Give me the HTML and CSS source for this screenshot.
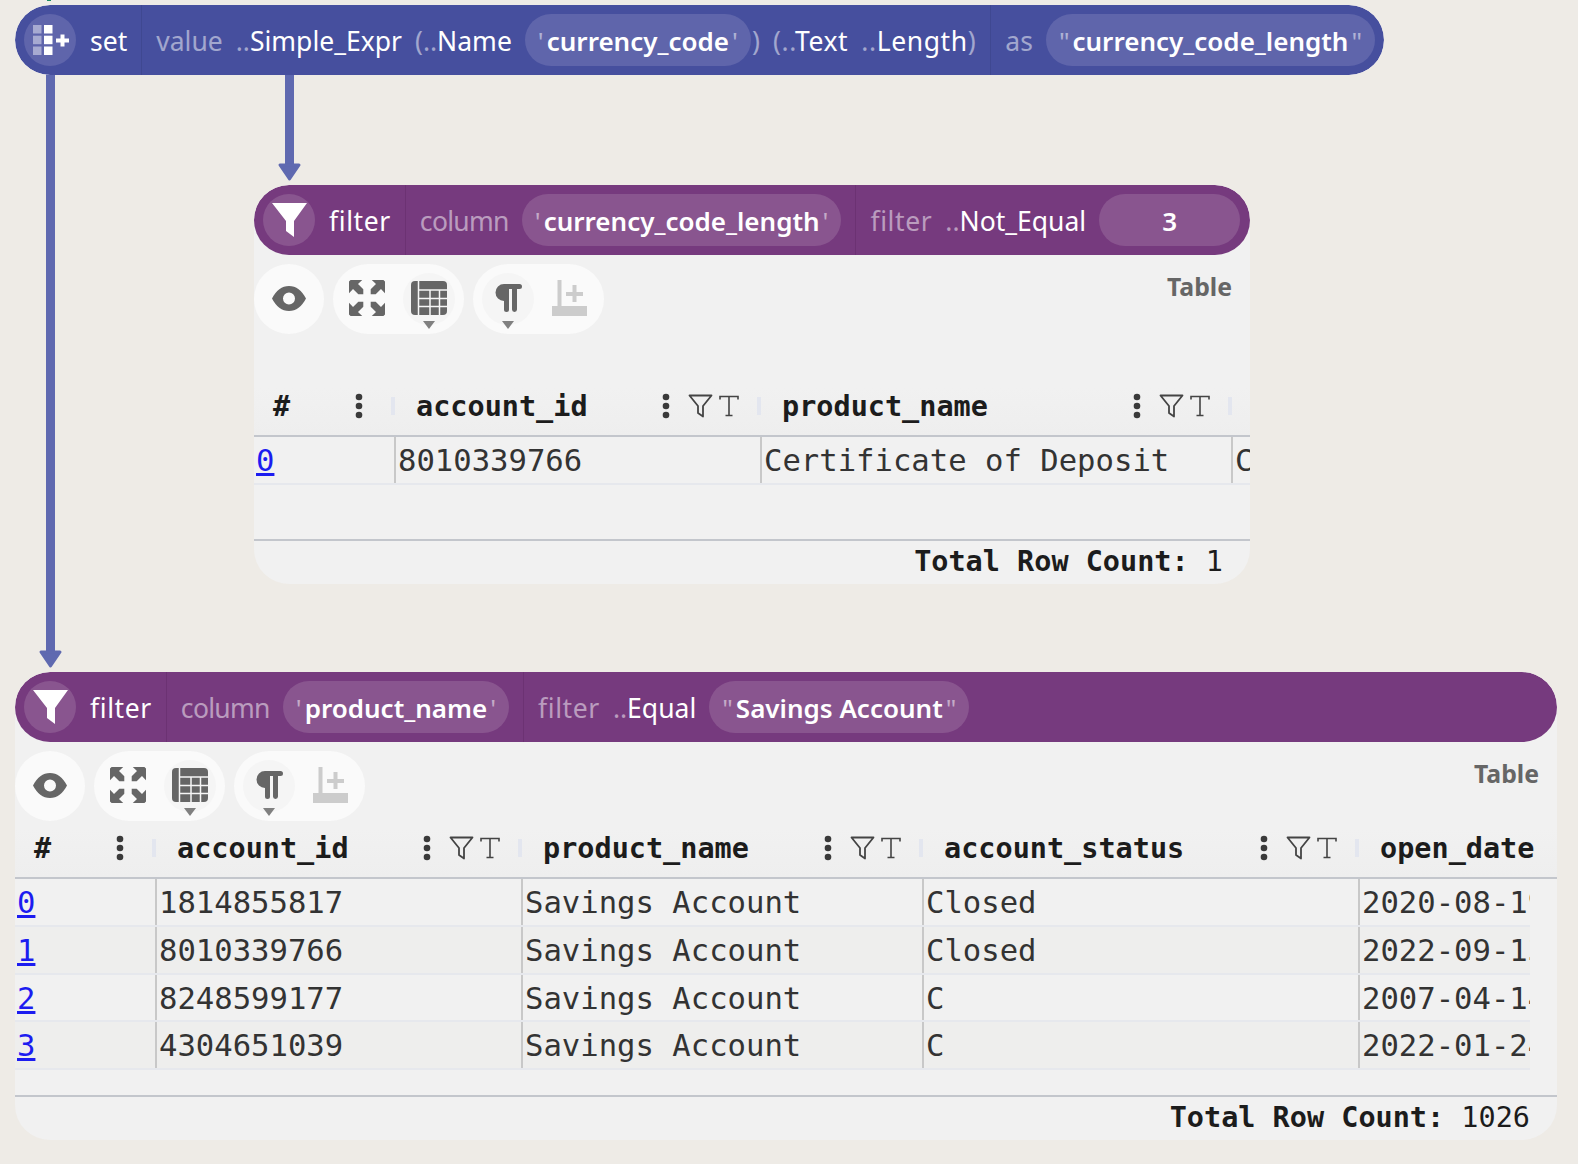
FILE: index.html
```html
<!DOCTYPE html>
<html lang="en">
<head>
    <meta charset="UTF-8">
    <title>Workflow graph</title>
    <link rel="stylesheet" href="styles.css">
</head>
<body>
    <svg class="defs" width="0" height="0">
        <symbol id="i-funnel" viewBox="0 0 35 34"><path d="M0 0H35L22 18V34L14 28V18Z"/></symbol>
        <symbol id="i-set" viewBox="0 0 36 30">
            <g opacity=".45"><rect x="0" y="0" width="8.500" height="8.500"/><rect x="0" y="10.700" width="8.500" height="8.500"/><rect x="0" y="21.500" width="8.500" height="8.500"/></g>
            <rect x="11" y="0" width="8.500" height="8.500"/><rect x="11" y="10.700" width="8.500" height="8.500"/><rect x="11" y="21.500" width="8.500" height="8.500"/>
            <path d="M27.500 9.500H31.500V13.500H36V17.500H31.500V21.500H27.500V17.500H23V13.500H27.500Z"/>
        </symbol>
        <symbol id="i-eye" viewBox="0 0 34 25"><path fill-rule="evenodd" d="M0 12.500C4 4.500 10 0 17 0S30 4.500 34 12.500C30 20.500 24 25 17 25S4 20.500 0 12.500ZM17 6.500A6 6 0 1 0 17 18.500A6 6 0 1 0 17 6.500Z"/></symbol>
        <symbol id="i-expand" viewBox="0 0 34 34">
            <g id="i-corner"><path d="M1.500 0H12.500L8.500 3.800L13.500 8.800V13.500H8.800L3.800 8.500L0 12.500V1.500Z"/></g>
            <use href="#i-corner" transform="matrix(-1 0 0 1 34 0)"/>
            <use href="#i-corner" transform="matrix(1 0 0 -1 0 34)"/>
            <use href="#i-corner" transform="matrix(-1 0 0 -1 34 34)"/>
        </symbol>
        <symbol id="i-table" viewBox="0 0 36 34">
            <rect width="36" height="34" rx="4"/>
            <path d="M7.500 0V34M8 9H36M8 17.500H36M8 25.500H36M19 9V34M28.500 9V34" fill="none" stroke="#f6f6f6" stroke-width="1.500"/>
        </symbol>
        <symbol id="i-para" viewBox="0 0 28 28">
            <path d="M10 0H25.500A2.500 2.500 0 0 1 25.500 5H23V25.500A2.500 2.500 0 0 1 18 25.500V5H15V25.500A2.500 2.500 0 0 1 10 25.500V17A8.500 8.500 0 0 1 10 0Z"/>
        </symbol>
        <symbol id="i-addcol" viewBox="0 0 35 36">
            <path d="M5.500 0H9.500V26H35V36H0V26H5.500Z"/>
            <path d="M20.500 5H24.500V12H31V16H24.500V22H20.500V16H14V12H20.500Z"/>
        </symbol>
        <symbol id="i-dots" viewBox="0 0 8 26"><circle cx="4" cy="4" r="3.300"/><circle cx="4" cy="13" r="3.300"/><circle cx="4" cy="22" r="3.300"/></symbol>
        <symbol id="i-colfilter" viewBox="0 0 25 25"><path d="M1.500 1.500H23.500L15 12V22.500L10 19V12Z" fill="none" stroke="currentColor" stroke-width="1.800" stroke-linejoin="round"/></symbol>
        <symbol id="i-coltype" viewBox="0 0 20 22"><path d="M1 4.500V1.500H19V4.500M10 1.500V20.500M6.500 20.500H13.500" fill="none" stroke="currentColor" stroke-width="1.600"/></symbol>
    </svg>

    <div class="canvas">
        <!-- connections between nodes -->
        <svg class="links" width="1578" height="1164" viewBox="0 0 1578 1164">
            <rect x="47" y="0" width="4" height="1" fill="#1b8a63"/>
            <path class="link" d="M50.500 70V652"/>
            <path class="link" d="M289.500 70V165"/>
            <path class="arrow" d="M41 652H60L50.500 666Z"/>
            <path class="arrow" d="M280 165H299L289.500 179Z"/>
        </svg>

        <!-- set node -->
        <div class="node node-set">
            <div class="head head-blue">
                <span class="icon-round"><svg class="ico-set"><use href="#i-set"/></svg></span>
                <span class="seg seg-name">set</span>
                <span class="seg">
                    <span class="dim">value</span>
                    <span class="tok"><i>..</i>Simple_Expr</span>
                    <span class="tok"><i>(..</i>Name</span>
                    <span class="pill"><i>'</i>currency_code<i>'</i></span>
                    <span class="tok tok-close"><i>)</i></span>
                    <span class="tok tok-loose"><i>(..</i>Text</span>
                    <span class="tok tok-loose"><i>..</i>Length<i>)</i></span>
                </span>
                <span class="seg seg-last">
                    <span class="dim">as</span>
                    <span class="pill"><i>"</i>currency_code_length<i>"</i></span>
                </span>
            </div>
        </div>

        <!-- filter on currency_code_length -->
        <div class="node node-one">
            <div class="head head-purple">
                <span class="icon-round"><svg class="ico-funnel"><use href="#i-funnel"/></svg></span>
                <span class="seg seg-name word-filter">filter</span>
                <span class="seg">
                    <span class="dim word-column">column</span>
                    <span class="pill"><i>'</i>currency_code_length<i>'</i></span>
                </span>
                <span class="seg seg-last">
                    <span class="dim word-filter">filter</span>
                    <span class="tok"><i>..</i>Not_Equal</span>
                    <span class="pill pill-num">3</span>
                </span>
            </div>
            <div class="viz">
                <div class="toolbar">
                    <div class="tools"><span class="tool"><svg class="ico-eye"><use href="#i-eye"/></svg></span></div>
                    <div class="tools">
                        <span class="tool"><svg class="ico-expand"><use href="#i-expand"/></svg></span>
                        <span class="tool tool-on"><svg class="ico-table"><use href="#i-table"/></svg><b class="caret"></b></span>
                    </div>
                    <div class="tools">
                        <span class="tool tool-on"><svg class="ico-para"><use href="#i-para"/></svg><b class="caret"></b></span>
                        <span class="tool"><svg class="ico-addcol"><use href="#i-addcol"/></svg></span>
                    </div>
                    <span class="viz-type">Table</span>
                </div>
                <div class="grid grid-one">
                    <div class="hrow">
                        <div class="hcell hcell-index"><span class="hname">#</span><svg class="ico-dots"><use href="#i-dots"/></svg><b class="hsep"></b></div>
                        <div class="hcell"><span class="hname">account_id</span><svg class="ico-dots"><use href="#i-dots"/></svg><svg class="ico-cf"><use href="#i-colfilter"/></svg><svg class="ico-ct"><use href="#i-coltype"/></svg><b class="hsep"></b></div>
                        <div class="hcell"><span class="hname">product_name</span><svg class="ico-dots"><use href="#i-dots"/></svg><svg class="ico-cf"><use href="#i-colfilter"/></svg><svg class="ico-ct"><use href="#i-coltype"/></svg><b class="hsep"></b></div>
                    </div>
                    <div class="row">
                        <div class="cell cell-index"><a href="#">0</a></div>
                        <div class="cell">8010339766</div>
                        <div class="cell">Certificate of Deposit</div>
                        <div class="cell">Closed</div>
                    </div>
                </div>
                <div class="total"><b>Total Row Count:</b> 1</div>
            </div>
        </div>

        <!-- filter on product_name -->
        <div class="node node-two">
            <div class="head head-purple">
                <span class="icon-round"><svg class="ico-funnel"><use href="#i-funnel"/></svg></span>
                <span class="seg seg-name word-filter">filter</span>
                <span class="seg">
                    <span class="dim word-column">column</span>
                    <span class="pill"><i>'</i>product_name<i>'</i></span>
                </span>
                <span class="seg seg-last">
                    <span class="dim word-filter">filter</span>
                    <span class="tok"><i>..</i>Equal</span>
                    <span class="pill"><i>"</i>Savings Account<i>"</i></span>
                </span>
            </div>
            <div class="viz">
                <div class="toolbar">
                    <div class="tools"><span class="tool"><svg class="ico-eye"><use href="#i-eye"/></svg></span></div>
                    <div class="tools">
                        <span class="tool"><svg class="ico-expand"><use href="#i-expand"/></svg></span>
                        <span class="tool tool-on"><svg class="ico-table"><use href="#i-table"/></svg><b class="caret"></b></span>
                    </div>
                    <div class="tools">
                        <span class="tool tool-on"><svg class="ico-para"><use href="#i-para"/></svg><b class="caret"></b></span>
                        <span class="tool"><svg class="ico-addcol"><use href="#i-addcol"/></svg></span>
                    </div>
                    <span class="viz-type">Table</span>
                </div>
                <div class="grid grid-two">
                    <div class="hrow">
                        <div class="hcell hcell-index"><span class="hname">#</span><svg class="ico-dots"><use href="#i-dots"/></svg><b class="hsep"></b></div>
                        <div class="hcell"><span class="hname">account_id</span><svg class="ico-dots"><use href="#i-dots"/></svg><svg class="ico-cf"><use href="#i-colfilter"/></svg><svg class="ico-ct"><use href="#i-coltype"/></svg><b class="hsep"></b></div>
                        <div class="hcell"><span class="hname">product_name</span><svg class="ico-dots"><use href="#i-dots"/></svg><svg class="ico-cf"><use href="#i-colfilter"/></svg><svg class="ico-ct"><use href="#i-coltype"/></svg><b class="hsep"></b></div>
                        <div class="hcell"><span class="hname">account_status</span><svg class="ico-dots"><use href="#i-dots"/></svg><svg class="ico-cf"><use href="#i-colfilter"/></svg><svg class="ico-ct"><use href="#i-coltype"/></svg><b class="hsep"></b></div>
                        <div class="hcell"><span class="hname">open_date</span></div>
                    </div>
                    <div class="row">
                        <div class="cell cell-index"><a href="#">0</a></div>
                        <div class="cell">1814855817</div>
                        <div class="cell">Savings Account</div>
                        <div class="cell">Closed</div>
                        <div class="cell">2020-08-19</div>
                    </div>
                    <div class="row">
                        <div class="cell cell-index"><a href="#">1</a></div>
                        <div class="cell">8010339766</div>
                        <div class="cell">Savings Account</div>
                        <div class="cell">Closed</div>
                        <div class="cell">2022-09-13</div>
                    </div>
                    <div class="row">
                        <div class="cell cell-index"><a href="#">2</a></div>
                        <div class="cell">8248599177</div>
                        <div class="cell">Savings Account</div>
                        <div class="cell">C</div>
                        <div class="cell">2007-04-14</div>
                    </div>
                    <div class="row">
                        <div class="cell cell-index"><a href="#">3</a></div>
                        <div class="cell">4304651039</div>
                        <div class="cell">Savings Account</div>
                        <div class="cell">C</div>
                        <div class="cell">2022-01-24</div>
                    </div>
                </div>
                <div class="total"><b>Total Row Count:</b> 1026</div>
            </div>
        </div>
    </div>
</body>
</html>
```

FILE: styles.css
```css
body {
    margin: 0;
    background: #eeebe6;
    font-family: "Noto Sans", sans-serif;
    overflow: hidden;
}
.defs {
    position: absolute;
}
.canvas {
    position: relative;
    width: 1578px;
    height: 1164px;
    overflow: hidden;
}
.links {
    position: absolute;
    left: 0;
    top: 0;
}
.link {
    stroke: #5f69b0;
    stroke-width: 9;
    fill: none;
}
.arrow {
    fill: #5f69b0;
    stroke: #5f69b0;
    stroke-width: 3;
    stroke-linejoin: round;
}

/* nodes sit at their place on the graph canvas */
.node {
    position: absolute;
    border-radius: 35px;
    background: #f1f1f1;
    overflow: hidden;
}
.node-set {
    left: 15px;
    top: 5px;
    width: 1369px;
    height: 70px;
}
.node-one {
    left: 254px;
    top: 185px;
    width: 996px;
    height: 399px;
}
.node-two {
    left: 15px;
    top: 672px;
    width: 1542px;
    height: 468px;
}

/* node header */
.head {
    display: flex;
    align-items: center;
    height: 70px;
    box-sizing: border-box;
    padding: 9px;
    border-radius: 35px;
    color: #fff;
    font-size: 26.500px;
    white-space: nowrap;
}
.head-blue {
    background: #464f9e;
    --pill: #5f65ab;
    --sep: #3f4891;
}
.head-purple {
    background: #763a7e;
    --pill: #89558f;
    --sep: #6c3273;
}
.icon-round {
    flex: none;
    display: flex;
    align-items: center;
    justify-content: center;
    width: 52px;
    height: 52px;
    border-radius: 50%;
    background: var(--pill);
}
.ico-funnel {
    width: 35px;
    height: 34px;
    fill: #fff;
}
.ico-set {
    width: 36px;
    height: 30px;
    fill: #fff;
    margin-left: 1px;
}
.seg {
    display: flex;
    align-items: center;
    gap: 13px;
    height: 70px;
    box-sizing: border-box;
    padding: 0 14px;
    border-right: 1.500px solid var(--sep);
}
.seg-name {
    padding-top: 2px;
}
.seg-last {
    border-right: 0;
    padding-right: 0;
}
.dim, .head i {
    font-style: normal;
    color: rgba(255, 255, 255, 0.5);
}
.dim, .tok {
    padding-top: 2px;
}
.word-filter {
    letter-spacing: 0.6px;
}
.word-column {
    letter-spacing: -0.7px;
}
.tok-close {
    margin-left: -12px;
}
.tok-loose {
    letter-spacing: 0.6px;
}
.pill {
    display: flex;
    align-items: center;
    justify-content: center;
    height: 52px;
    box-sizing: border-box;
    padding: 2px 10px 0;
    border-radius: 26px;
    background: var(--pill);
    font-size: 26px;
    font-weight: 600;
}
.pill i {
    font-weight: 400;
    margin: 0 3px;
}
.pill-num {
    width: 141px;
}

/* visualization under the header */
.viz {
    display: flex;
    flex-direction: column;
    height: calc(100% - 70px);
}
.toolbar {
    display: flex;
    gap: 9px;
    margin-top: 9px;
}
.tools {
    display: flex;
    align-items: center;
    gap: 9px;
    height: 70px;
    padding: 0 9px;
    border-radius: 35px;
    background: #fafafa;
}
.tool {
    position: relative;
    display: flex;
    align-items: center;
    justify-content: center;
    width: 52px;
    height: 52px;
    border-radius: 50%;
    fill: #666;
}
.tool-on {
    background: #f5f5f5;
}
.caret {
    position: absolute;
    left: 20px;
    bottom: -4px;
    border-left: 6px solid transparent;
    border-right: 6px solid transparent;
    border-top: 8px solid #808080;
}
.ico-eye {
    width: 34px;
    height: 25px;
    margin-top: -2px;
}
.ico-expand {
    width: 36px;
    height: 36px;
    margin-top: -3px;
    margin-left: -2px;
}
.ico-table {
    width: 36px;
    height: 34px;
    margin-top: -2px;
}
.ico-para {
    width: 28px;
    height: 28px;
    margin-top: -2px;
}
.ico-addcol {
    width: 35px;
    height: 36px;
    margin-top: -2px;
    fill: #ccc;
}
.viz-type {
    margin-left: auto;
    margin-right: 18px;
    margin-top: 5px;
    color: #666;
    font-size: 24.800px;
    font-weight: 700;
}

/* table */
.grid {
    margin-top: 8px;
    font-family: "DejaVu Sans Mono", monospace;
}
.node-one .grid {
    margin-top: 53px;
}
.hrow, .row {
    display: grid;
}
.grid-one .hrow {
    grid-template-columns: 141px 366px 471px;
}
.grid-one .row {
    grid-template-columns: 140px 366px 471px 60px;
}
.grid-two .hrow {
    grid-template-columns: 141px 366px 401px 436px 171px;
}
.grid-two .row {
    grid-template-columns: 140px 366px 401px 436px 172px;
    width: 1515px;
}
.hrow {
    height: 50px;
    box-sizing: border-box;
    border-bottom: 2px solid #c3c6cc;
    background: linear-gradient(#f1f1f1, #eeeeee);
}
.hcell {
    display: flex;
    align-items: center;
    padding-left: 21px;
    padding-bottom: 10px;
    color: #1c1c1c;
    font-size: 28.500px;
    font-weight: 700;
}
.hname {
    flex: 1;
    white-space: nowrap;
}
.ico-dots {
    width: 8px;
    height: 26px;
    fill: #3a3a3a;
}
.ico-cf {
    width: 25px;
    height: 25px;
    margin-left: 18px;
    color: #444;
}
.ico-ct {
    width: 20px;
    height: 22px;
    margin-left: 6px;
    color: #444;
}
.hsep {
    width: 4px;
    height: 18px;
    margin-left: 18px;
    background: #e3e6ef;
}
.hcell-index .hsep {
    margin-left: 28px;
}
.hcell-index {
    padding-left: 19px;
}
.row {
    height: 47.800px;
    box-sizing: border-box;
    border-bottom: 2px solid #e6e8ed;
    color: #333;
    font-size: 30.600px;
}
.row:nth-child(odd) {
    background: #eeeeed;
}
.cell {
    padding-left: 2px;
    border-left: 2px solid #c8c8c8;
    line-height: 48px;
    overflow: hidden;
    white-space: nowrap;
}
.cell-index {
    border-left: 0;
}
.cell a {
    color: #1c1cf0;
}
.total {
    margin-top: auto;
    height: 43px;
    border-top: 2px solid #c3c6cc;
    padding-right: 27px;
    text-align: right;
    line-height: 41px;
    color: #1c1c1c;
    font-family: "DejaVu Sans Mono", monospace;
    font-size: 28.500px;
}
```
